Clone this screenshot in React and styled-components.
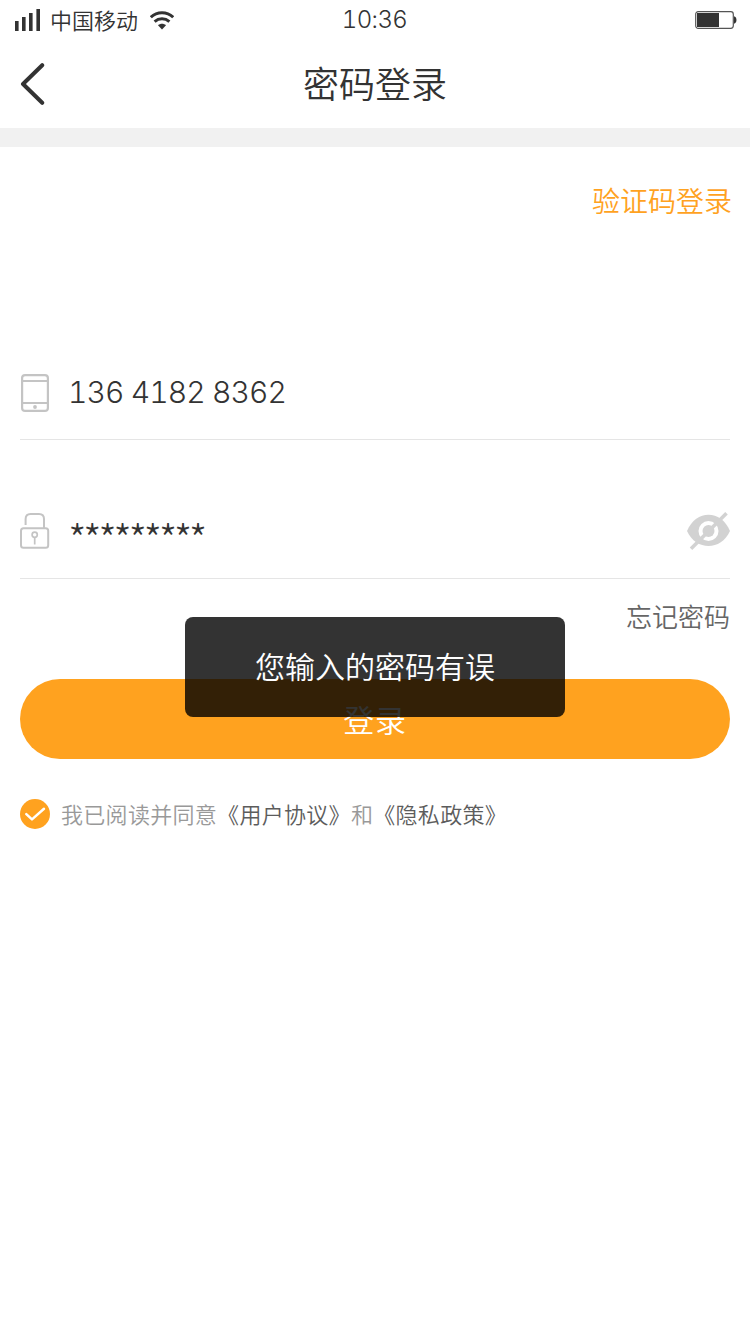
import { useState } from "react";
import styled, { createGlobalStyle } from "styled-components";

export default function App() {
  const [agree, setAgree] = useState(true);

  return (
    <>
      <GlobalStyle />
      <Page>
        <StatusBar>
          <StatusLeft>
            <SignalIcon />
            <Carrier>中国移动</Carrier>
            <WifiIcon />
          </StatusLeft>
          <Time>10:36</Time>
          <StatusRight>
            <BatteryIcon />
          </StatusRight>
        </StatusBar>
        <Header>
          <BackBtn aria-label="返回">
            <BackIcon />
          </BackBtn>
          <Title>密码登录</Title>
        </Header>
        <Divider />
        <Content>
          <CodeLogin>验证码登录</CodeLogin>
          <Field>
            <PhoneIcon />
            <PhoneNumber>136 4182 8362</PhoneNumber>
          </Field>
          <Field $raised>
            <LockIcon />
            <Password>*********</Password>
            <EyeOffIcon />
          </Field>
          <Forgot>忘记密码</Forgot>
          <LoginArea>
            <LoginBtn>登录</LoginBtn>
            <Toast role="alert">您输入的密码有误</Toast>
          </LoginArea>
          <Agreement>
            <CheckBtn onClick={() => setAgree((agree) => !agree)}>
              <CheckIcon checked={agree} />
            </CheckBtn>
            <AgreeText>
              我已阅读并同意<b>《用户协议》</b>和<b>《隐私政策》</b>
            </AgreeText>
          </Agreement>
        </Content>
      </Page>
    </>
  );
}

const SignalIcon = () => (
  <svg width="26" height="22" viewBox="0 0 26 22" fill="#333">
    <rect x="0" y="12" width="3.6" height="10" />
    <rect x="7" y="8" width="3.6" height="14" />
    <rect x="14" y="4" width="3.6" height="18" />
    <rect x="21.4" y="0" width="3.6" height="22" />
  </svg>
);

const WifiIcon = () => (
  <svg width="24" height="19" viewBox="0 0 24 19" fill="none">
    <path d="M0.8 6.3C7 0.2 17 0.2 23.2 6.3" stroke="#333" strokeWidth="3" />
    <path d="M4.6 10.7C9 6.9 15 6.9 19.4 10.7" stroke="#333" strokeWidth="3" />
    <path d="M8 14.2C10.4 12.2 13.6 12.2 16 14.2L12 18.4Z" fill="#333" />
  </svg>
);

const BatteryIcon = () => (
  <svg width="42" height="20" viewBox="0 0 42 20">
    <rect
      x="0.7"
      y="1.7"
      width="37.6"
      height="16.6"
      rx="2.5"
      fill="none"
      stroke="#555"
      strokeWidth="1.2"
    />
    <rect x="2" y="3" width="22" height="14" fill="#333" />
    <path d="M39 6.5H39.8Q41.5 7 41.5 10T39.8 13.5H39Z" fill="#333" />
  </svg>
);

const BackIcon = () => (
  <svg width="26" height="42" viewBox="0 0 26 42">
    <path
      d="M22.2 2.2L3 21L22.2 39.8"
      fill="none"
      stroke="#333"
      strokeWidth="4"
      strokeLinecap="round"
      strokeLinejoin="round"
    />
  </svg>
);

const PhoneIcon = () => (
  <svg width="30" height="38" viewBox="0 0 30 38" fill="none">
    <rect x="2.1" y="1.1" width="25.8" height="35.8" rx="3" stroke="#c4c4c4" strokeWidth="2.2" />
    <path d="M2 7H28M2 29H28" stroke="#c4c4c4" strokeWidth="2.2" />
    <circle cx="15" cy="33" r="1.9" fill="#c4c4c4" />
  </svg>
);

const LockIcon = () => (
  <svg width="30" height="36" viewBox="0 0 30 36" fill="none">
    <g stroke="#c4c4c4" strokeWidth="2">
      <path d="M5.6 12V6Q5.6 1 10.6 1H19Q24 1 24 6V15" />
      <rect x="1" y="15.3" width="27.2" height="19.4" rx="2.5" />
      <circle cx="14.7" cy="21.8" r="2.6" strokeWidth="1.7" />
      <path d="M14.7 24.5V31.5" strokeWidth="1.7" />
    </g>
  </svg>
);

const EyeOffIcon = () => (
  <svg width="44" height="38" viewBox="0 0 44 38">
    <path d="M1 19C10 -2.7 35 -2.7 44 19C35 39 10 39 1 19Z" fill="#d2d2d2" />
    <circle cx="22.5" cy="19" r="10" fill="#fff" />
    <circle cx="22.5" cy="19" r="6" fill="#d2d2d2" />
    <path d="M5 36.7L40.5 1.3" stroke="#d2d2d2" strokeWidth="3.6" />
  </svg>
);

const CheckIcon = ({ checked }) => (
  <svg width="30" height="30" viewBox="0 0 30 30">
    <circle cx="15" cy="15" r="15" fill={checked ? "#ffa21f" : "#d2d2d2"} />
    <path
      d="M6.3 15.2L12 20.4L24 9.8"
      fill="none"
      stroke="#fff"
      strokeWidth="2.5"
      strokeLinecap="round"
      strokeLinejoin="round"
    />
  </svg>
);

const GlobalStyle = createGlobalStyle`
  * {
    box-sizing: border-box;
  }
  body {
    margin: 0;
    background-color: #fff;
    color: #333;
    font-family: "Noto Sans CJK SC", sans-serif;
    font-weight: 350;
  }
  button {
    padding: 0;
    border: 0;
    background: none;
    font-family: inherit;
    font-weight: inherit;
  }
  svg {
    display: block;
    flex-shrink: 0;
  }
`;

const Page = styled.div`
  width: 750px;
  height: 1334px;
  background-color: #fff;
  overflow: hidden;
`;

const StatusBar = styled.div`
  height: 40px;
  padding: 0 13px 0 15px;
  display: grid;
  grid-template-columns: 1fr auto 1fr;
  align-items: center;
`;

const StatusLeft = styled.div`
  display: flex;
  align-items: center;
`;

const Carrier = styled.span`
  margin: 0 12px 0 9px;
  padding-bottom: 2px;
  font-size: 22px;
  line-height: 30px;
`;

const Time = styled.span`
  margin-right: 3px;
  font-family: Inter, "Noto Sans CJK SC", sans-serif;
  font-size: 24px;
  font-weight: 350;
  font-variant-numeric: tabular-nums;
  letter-spacing: -0.6px;
  line-height: 32px;
`;

const StatusRight = styled.div`
  display: flex;
  justify-content: flex-end;
`;

const Header = styled.header`
  height: 88px;
  padding: 0 20px;
  display: grid;
  grid-template-columns: 1fr auto 1fr;
  align-items: center;
`;

const BackBtn = styled.button`
  width: 26px;
`;

const Title = styled.h1`
  margin: 0;
  padding-bottom: 4px;
  font-size: 36px;
  font-weight: 350;
  line-height: 48px;
`;

const Divider = styled.div`
  height: 19px;
  background-color: #f1f1f1;
`;

const Content = styled.main`
  padding: 33px 20px 0;
  display: flex;
  flex-direction: column;
`;

const CodeLogin = styled.a`
  align-self: flex-end;
  margin: 0 -2px 121px 0;
  color: #ffa21f;
  font-size: 28px;
  line-height: 40px;
`;

const Field = styled.div`
  height: 94px;
  margin-bottom: 45px;
  padding-bottom: ${(props) => (props.$raised ? "2px" : "0")};
  display: flex;
  align-items: center;
  border-bottom: 1px solid #e5e5e5;

  &:first-of-type {
    margin-top: 5px;
  }
`;

const PhoneNumber = styled.span`
  margin-left: 18px;
  padding-bottom: 1px;
  font-family: Inter, sans-serif;
  font-size: 30px;
  font-weight: 350;
  font-variant-numeric: tabular-nums;
  letter-spacing: -0.9px;
  line-height: 40px;
`;

const Password = styled.span`
  flex: 1;
  margin-left: 18px;
  padding-top: 15px;
  font-size: 42px;
  font-weight: 300;
  letter-spacing: -3.5px;
  line-height: 40px;
`;

const Forgot = styled.a`
  align-self: flex-end;
  margin-top: -28px;
  color: #666;
  font-size: 26px;
  line-height: 40px;
`;

const LoginArea = styled.div`
  position: relative;
  margin-top: 43px;
`;

const LoginBtn = styled.button`
  width: 100%;
  height: 80px;
  border-radius: 40px;
  background-color: #ffa21f;
  color: #fff;
  font-size: 31px;
  letter-spacing: 0.7px;
  line-height: 80px;
`;

const Toast = styled.div`
  position: absolute;
  top: -62px;
  left: 50%;
  width: 380px;
  height: 100px;
  transform: translateX(-50%);
  border-radius: 8px;
  background-color: rgba(0, 0, 0, 0.8);
  color: #fff;
  font-size: 30px;
  line-height: 96px;
  text-align: center;
`;

const Agreement = styled.div`
  margin-top: 40px;
  display: flex;
  align-items: center;
`;

const CheckBtn = styled.button`
  width: 30px;
  height: 30px;
  margin-right: 11px;
`;

const AgreeText = styled.p`
  margin: 0;
  padding-bottom: 2px;
  color: #999;
  font-size: 22px;
  letter-spacing: 0.3px;
  line-height: 28px;
  white-space: nowrap;
  b {
    color: #5c5c5c;
    font-weight: inherit;
  }
`;
